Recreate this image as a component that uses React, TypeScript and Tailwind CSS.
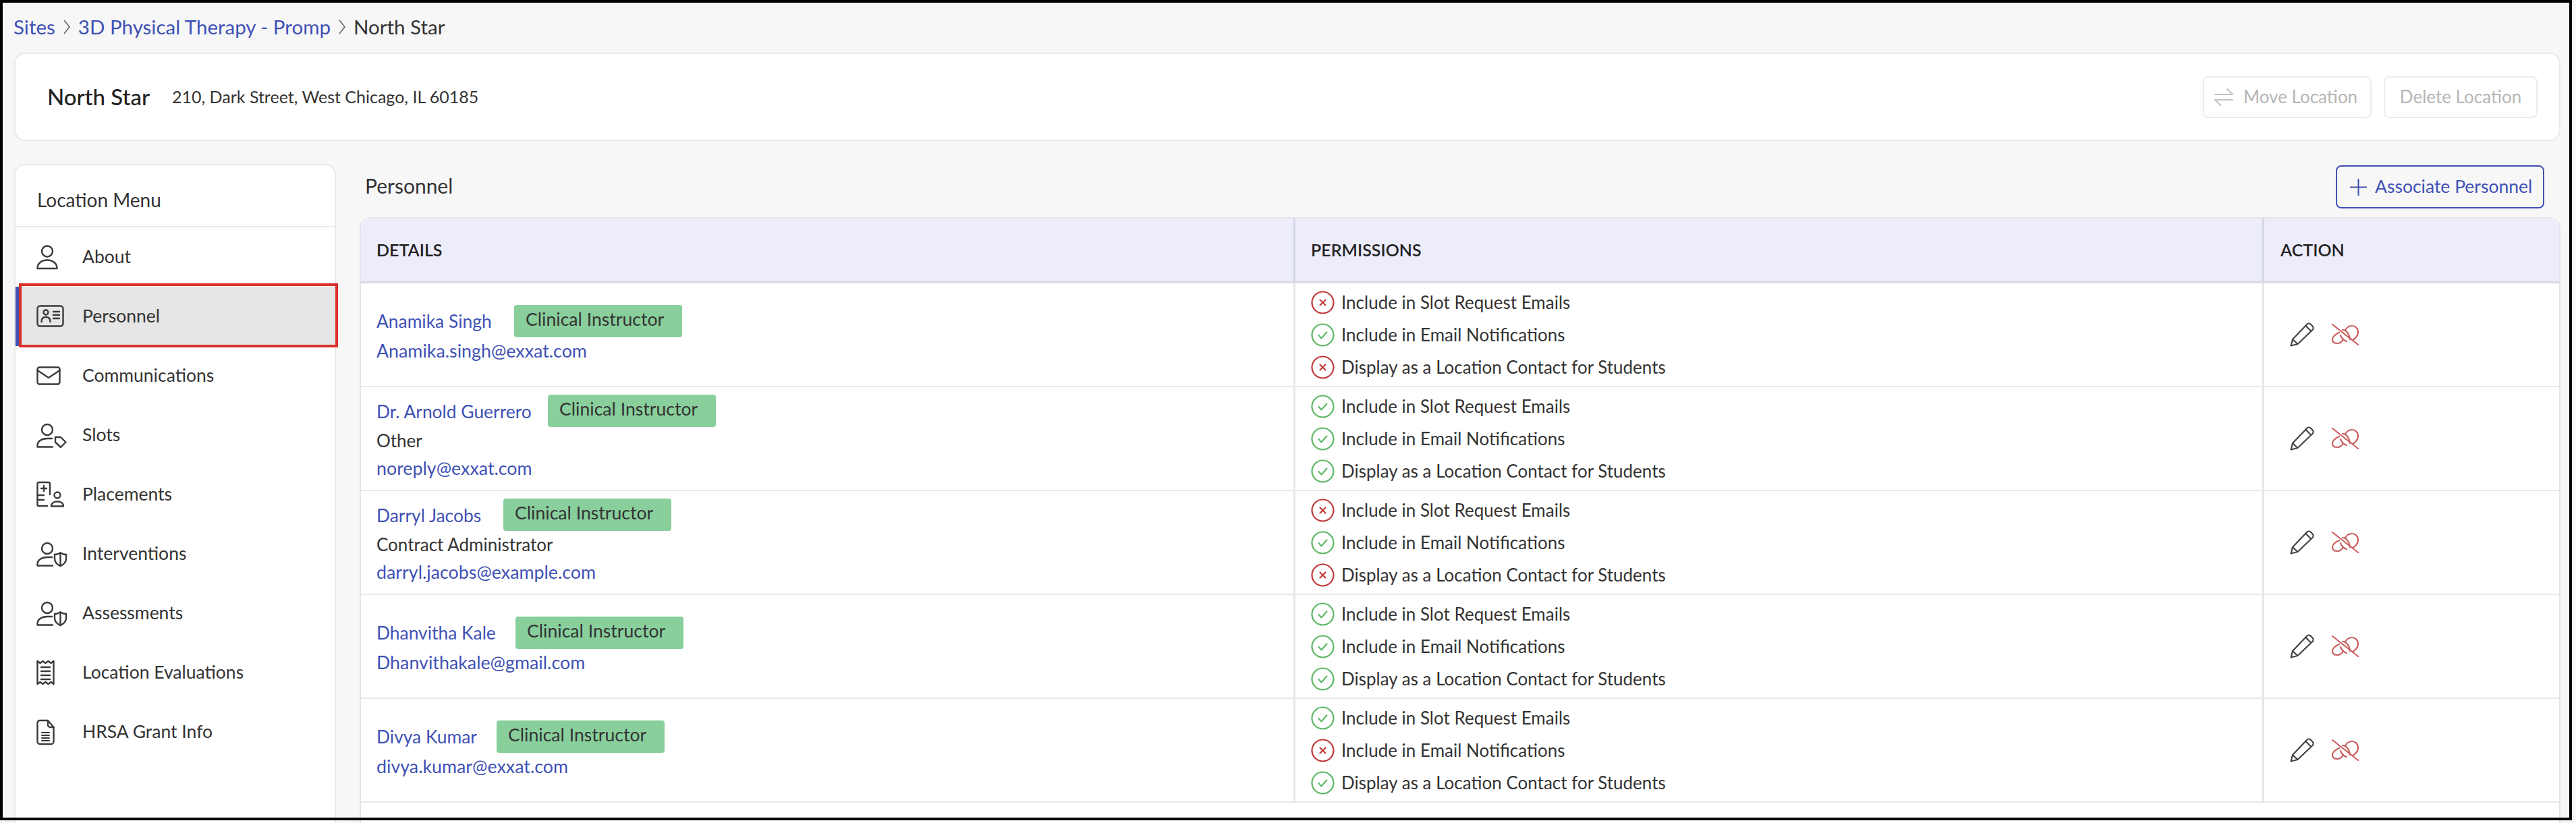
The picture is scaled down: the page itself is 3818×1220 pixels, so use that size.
import type { ReactNode } from 'react';

type Person = {
  name: string;
  nameWidth: string;
  role?: string;
  email: string;
  perms: [boolean, boolean, boolean];
};

const people: Person[] = [
  { name: 'Anamika Singh', nameWidth: 'w-[204px]', email: 'Anamika.singh@exxat.com', perms: [false, true, false] },
  { name: 'Dr. Arnold Guerrero', nameWidth: 'w-[254px]', role: 'Other', email: 'noreply@exxat.com', perms: [true, true, true] },
  { name: 'Darryl Jacobs', nameWidth: 'w-[188px]', role: 'Contract Administrator', email: 'darryl.jacobs@example.com', perms: [false, true, false] },
  { name: 'Dhanvitha Kale', nameWidth: 'w-[206px]', email: 'Dhanvithakale@gmail.com', perms: [true, true, true] },
  { name: 'Divya Kumar', nameWidth: 'w-[178px]', email: 'divya.kumar@exxat.com', perms: [true, false, true] },
];

const permLabels = ['Include in Slot Request Emails', 'Include in Email Notifications', 'Display as a Location Contact for Students'];

function MenuSvg({ children }: { children: ReactNode }) {
  return (
    <svg width="46" height="40" viewBox="0 0 46 40" fill="none" stroke="#3a3a3a" strokeWidth="2.4" strokeLinecap="round" strokeLinejoin="round">
      {children}
    </svg>
  );
}

const head = <circle cx="16" cy="12" r="8" />;
const shield = (
  <>
    <path d="M27 21C31 21 33 20 35.5 18.5C38 20 40 21 44 21V27C44 33 40 36 35.5 38C31 36 27 33 27 27Z" />
    <path d="M35.5 18.5V38" />
  </>
);
const shortBody = <path d="M24 37.5H1.5V35.5C1.5 29 8 25 16 25H23" />;

const menu: { label: string; icon: ReactNode; active?: boolean }[] = [
  {
    label: 'About',
    icon: (
      <MenuSvg>
        <circle cx="16" cy="11.5" r="8" />
        <path d="M1.5 37C1.5 29 8 24.5 16 24.5S30.5 29 30.5 37Z" />
      </MenuSvg>
    ),
  },
  {
    label: 'Personnel',
    active: true,
    icon: (
      <MenuSvg>
        <rect x="1.5" y="4.5" width="38" height="30" rx="4" />
        <circle cx="14" cy="14" r="3.5" />
        <path d="M7.5 28C7.5 23 10.5 21 14 21S20.5 23 20.5 28" />
        <path d="M25 13H34M25 18H34M25 23H34" />
      </MenuSvg>
    ),
  },
  {
    label: 'Communications',
    icon: (
      <MenuSvg>
        <rect x="1.5" y="7.5" width="33" height="25" rx="3" />
        <path d="M1.5 12L18 23L34.5 12" />
      </MenuSvg>
    ),
  },
  {
    label: 'Slots',
    icon: (
      <MenuSvg>
        {head}
        {shortBody}
        <path d="M28 23H36L43.5 30.5L36 38L28 30.5Z" />
      </MenuSvg>
    ),
  },
  {
    label: 'Placements',
    icon: (
      <MenuSvg>
        <path d="M20 20V4A2 2 0 0 0 18 2H3.5A2 2 0 0 0 1.5 4V35A2 2 0 0 0 3.5 37H16" />
        <path d="M1.5 21H11M1.5 28H11M11 7V15M7 11H15" />
        <circle cx="31" cy="21" r="4.5" />
        <path d="M22 37.5C22 33 26 30.5 31 30.5S40 33 40 37.5Z" />
      </MenuSvg>
    ),
  },
  {
    label: 'Interventions',
    icon: (
      <MenuSvg>
        {head}
        {shortBody}
        {shield}
      </MenuSvg>
    ),
  },
  {
    label: 'Assessments',
    icon: (
      <MenuSvg>
        {head}
        {shortBody}
        {shield}
      </MenuSvg>
    ),
  },
  {
    label: 'Location Evaluations',
    icon: (
      <MenuSvg>
        <path d="M1.5 37V3L5.5 6L9.5 3L13.5 6L17.5 3L21.5 6L25.5 3V37L21.5 34L17.5 37L13.5 34L9.5 37L5.5 34Z" />
        <path d="M7 12H20M7 18H20M7 24H20M7 30H20" />
      </MenuSvg>
    ),
  },
  {
    label: 'HRSA Grant Info',
    icon: (
      <MenuSvg>
        <path d="M17 3H5A3.5 3.5 0 0 0 1.5 6.5V34.5A3.5 3.5 0 0 0 5 38H22A3.5 3.5 0 0 0 25.5 34.5V13Z" />
        <path d="M17 3V9.5A3.5 3.5 0 0 0 20.5 13H25.5" />
        <path d="M8 21H19M8 25H19M8 29H19M8 33H19" strokeWidth="2" />
      </MenuSvg>
    ),
  },
];

function Chevron() {
  return (
    <svg width="10" height="22" viewBox="0 0 10 22" fill="none" stroke="#666" strokeWidth="1.6" className="mx-[12px]">
      <path d="M1 1L9 11L1 21" />
    </svg>
  );
}

function StatusIcon({ ok }: { ok: boolean }) {
  return (
    <svg width="35" height="35" viewBox="0 0 35 35" fill="none" strokeWidth="2.2" strokeLinecap="round" strokeLinejoin="round" stroke={ok ? '#5cb865' : '#c23b3b'} className="shrink-0">
      <circle cx="17.5" cy="17.5" r="16" />
      {ok ? <path d="M11.5 18L15.5 22.5L23.5 13.5" /> : <path d="M13.5 13.5L21.5 21.5M21.5 13.5L13.5 21.5" />}
    </svg>
  );
}

function PencilIcon() {
  return (
    <svg width="36" height="36" viewBox="0 0 36 36" fill="none" stroke="#444" strokeWidth="2.2" strokeLinejoin="round">
      <path d="M1.5 34.5L4 25L25 3A4 4 0 0 1 30.5 2.5L33.5 5.5A4 4 0 0 1 33.5 11L11.5 32Z" />
      <path d="M23.5 5L31.5 13M4 25L11.5 32" />
    </svg>
  );
}

function UnlinkIcon() {
  return (
    <svg width="40" height="32" viewBox="0 0 40 32" fill="none" stroke="#c9605f" strokeWidth="2.2" strokeLinecap="round">
      <path d="M1 1L39 31" />
      <path d="M20 10C22 5 26 3 30 3C35 3 39 7 39 12C39 17 36 21 31 24" />
      <path d="M11 13C6 15 1 19 1 23C1 27 4 29 8 29C12 29 15 27 17 23" />
      <path d="M16 9C21 9 26 14 27 23M13 17C14 21 18 25 22 26" />
    </svg>
  );
}

export default function App() {
  return (
    <div className="relative flex h-[1220px] w-[3818px] flex-col overflow-hidden bg-[#f7f7f7] font-['Lato',sans-serif] text-[26px] text-[#333]">
      {/* Breadcrumb */}
      <div className="flex h-[78px] shrink-0 items-center pt-[2px] pl-[20px] text-[29.5px]">
        <span className="text-[#3f51b5]">Sites</span>
        <Chevron />
        <span className="text-[#3f51b5]">3D Physical Therapy - Promp</span>
        <Chevron />
        <span>North Star</span>
      </div>

      {/* Location header */}
      <div className="mr-[23px] ml-[21px] flex h-[131px] shrink-0 items-center justify-between rounded-2xl border-2 border-[#e9e9e9] bg-white pr-[32px] pl-[47px]">
        <div className="flex items-center">
          <h1 className="w-[185px] text-[33px] font-medium text-[#222]">North Star</h1>
          <span className="text-[25px]">210, Dark Street, West Chicago, IL 60185</span>
        </div>
        <div className="flex gap-[18px] text-[#b5b5b5]">
          <button className="flex h-[62px] w-[250px] items-center gap-[15px] rounded-lg border-2 border-[#ececec] pl-[15px]">
            <svg width="28" height="28" viewBox="0 0 28 28" fill="none" stroke="#c2c2c2" strokeWidth="2" strokeLinecap="round" strokeLinejoin="round">
              <path d="M1 10H27L19 2M27 18H1L9 26" />
            </svg>
            Move Location
          </button>
          <button className="flex h-[62px] w-[228px] items-center justify-center rounded-lg border-2 border-[#ececec]">Delete Location</button>
        </div>
      </div>

      <div className="mt-[34px] mr-[23px] ml-[21px] flex min-h-0 flex-1 gap-[35px]">
        {/* Location menu */}
        <aside className="w-[477px] shrink-0 rounded-t-2xl border-x-2 border-t-2 border-[#e9e9e9] bg-white text-[26.5px]">
          <div className="flex h-[92px] items-end border-b-2 border-[#e9e9e9] pb-[18px] pl-[32px] text-[28px]">Location Menu</div>
          {menu.map((item) => (
            <div key={item.label} className={`relative flex h-[88px] items-center border-l-[6px] pl-[25px] ${item.active ? 'border-[#3f51b5] bg-[#e6e6e6]' : 'border-transparent'}`}>
              <span className="flex w-[68px] shrink-0">{item.icon}</span>
              <span>{item.label}</span>
              {item.active && <div className="absolute -top-[5px] -right-[5px] -bottom-[2px] -left-[1px] border-4 border-[#d9302a]" />}
            </div>
          ))}
        </aside>

        {/* Personnel */}
        <section className="flex min-w-0 flex-1 flex-col">
          <div className="flex h-[79px] shrink-0 items-start justify-between pt-[2px] pr-[24px] pl-[8px]">
            <h2 className="mt-[8px] text-[30px]">Personnel</h2>
            <button className="flex h-[64px] w-[309px] items-center gap-[12px] rounded-lg border-2 border-[#3f51b5] pl-[19px] text-[26.5px] text-[#3f51b5]">
              <svg width="25" height="25" viewBox="0 0 25 25" fill="none" stroke="#3f51b5" strokeWidth="2">
                <path d="M12.5 0V25M0 12.5H25" />
              </svg>
              Associate Personnel
            </button>
          </div>

          <div className="min-h-0 flex-1 rounded-t-2xl border-x-2 border-t-2 border-[#e4e4ea] bg-white">
            <div className="grid h-[96px] grid-cols-[1382px_1436px_1fr] rounded-t-2xl border-b-[3px] border-[#d9d9ea] bg-[#edecfb] text-[25px] font-semibold text-[#222]">
              <div className="flex items-center pl-[23px]">DETAILS</div>
              <div className="flex items-center border-l-[3px] border-[#d5d5e8] pl-[23px]">PERMISSIONS</div>
              <div className="flex items-center border-l-[3px] border-[#d5d5e8] pl-[24px]">ACTION</div>
            </div>

            {people.map((person) => (
              <div key={person.email} className="grid h-[154px] grid-cols-[1382px_1436px_1fr] border-b-2 border-[#e8e8e8]">
                <div className="flex flex-col justify-center pl-[23px]">
                  <div className="flex h-[48px] items-center">
                    <span className={`${person.nameWidth} pt-[3px] text-[26.4px] text-[#3f51b5]`}>{person.name}</span>
                    <span className="flex h-[48px] w-[249px] items-center rounded bg-[#88cf9c] pb-[4px] pl-[17px] text-[26.6px]">Clinical Instructor</span>
                  </div>
                  {person.role && <div className="flex h-[41px] items-center">{person.role}</div>}
                  <div className="flex h-[41px] items-center text-[26.8px] text-[#3f51b5]">{person.email}</div>
                </div>
                <div className="flex flex-col justify-center gap-[13px] border-l-[3px] border-[#e6e6e6] pl-[23px]">
                  {person.perms.map((ok, i) => (
                    <div key={permLabels[i]} className="flex h-[35px] items-center gap-[10px]">
                      <StatusIcon ok={ok} />
                      <span>{permLabels[i]}</span>
                    </div>
                  ))}
                </div>
                <div className="flex items-center gap-[26px] border-l-[3px] border-[#e6e6e6] pl-[38px]">
                  <PencilIcon />
                  <UnlinkIcon />
                </div>
              </div>
            ))}
          </div>
        </section>
      </div>

      {/* Black annotation frame drawn over the page */}
      <div className="pointer-events-none absolute top-0 left-0 h-[1216px] w-[3812px] border-4 border-black" />
    </div>
  );
}
